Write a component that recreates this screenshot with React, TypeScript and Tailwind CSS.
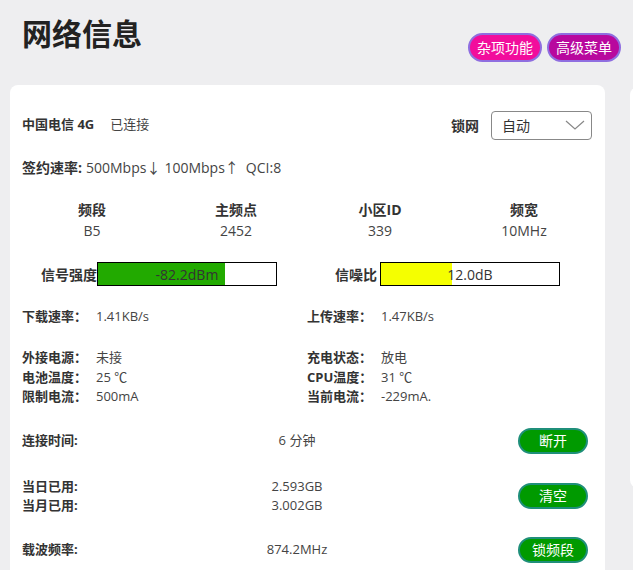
const font = "font-['Open_Sans','Noto_Sans_CJK_SC',sans-serif]";

function PillButton({ label, bg }: { label: string; bg: string }) {
  return (
    <button
      className={`h-[29px] px-[7px] rounded-full border-2 border-[#8f6ee0] text-white text-[14px] leading-none ${bg}`}
    >
      {label}
    </button>
  );
}

function GreenButton({ label }: { label: string }) {
  return (
    <button className="w-[70px] h-[26px] rounded-full bg-[#009a00] border-2 border-[#1f8f7a] text-white text-[14px] leading-none">
      {label}
    </button>
  );
}

function Bar({ pct, fill, text }: { pct: number; fill: string; text: string }) {
  return (
    <div className="relative w-[180px] h-[24px] border border-black bg-white">
      <div className={`h-full ${fill}`} style={{ width: `${pct}%` }} />
      <span className="absolute inset-0 flex items-center justify-center text-[14px] text-[#333]">
        {text}
      </span>
    </div>
  );
}

function Pair({ label, value }: { label: string; value: string }) {
  return (
    <div className="flex">
      <span className="w-[74px] font-bold text-[#333]">{label}</span>
      <span className="text-[#444]">{value}</span>
    </div>
  );
}

export default function App() {
  const cols = [
    ['频段', 'B5'],
    ['主频点', '2452'],
    ['小区ID', '339'],
    ['频宽', '10MHz'],
  ];

  return (
    <div className={`w-[633px] h-[570px] overflow-hidden bg-[#eeeef0] ${font}`}>
      {/* header */}
      <div className="h-[85px] flex items-start">
        <h1 className="pl-[22px] mt-[19px] text-[30px] leading-[30px] font-bold text-[#222]">网络信息</h1>
        <div className="ml-auto mt-[33px] pr-[12px] flex gap-[5px]">
          <PillButton label="杂项功能" bg="bg-[#f20d9c]" />
          <PillButton label="高级菜单" bg="bg-[#b8089e]" />
        </div>
      </div>

      <div className="flex gap-[25px] items-start">
        <div className="ml-[10px] w-[595px] shrink-0 bg-white rounded-[8px] pl-[12px] pb-[20px] text-[13px]">
          {/* carrier + lock */}
          <div className="mt-[25px] h-[30px] pr-[13px] flex items-center">
            <span className="font-bold text-[#333] text-[13px]">中国电信 4G</span>
            <span className="ml-[16px] text-[#444]">已连接</span>
            <span className="ml-auto font-bold text-[14px] text-[#333]">锁网</span>
            <div className="ml-[12px] w-[101px] h-[29px] border border-[#888] rounded-[4px] flex items-center pl-[10px] pr-[6px] text-[14px] text-[#333]">
              <span>自动</span>
              <svg className="ml-auto" width="20" height="10" viewBox="0 0 20 10" fill="none">
                <path d="M1 1 L10 9 L19 1" stroke="#888" strokeWidth="1.2" />
              </svg>
            </div>
          </div>

          {/* subscribed rate */}
          <div className="mt-[17px] h-[20px] flex items-center text-[14px]">
            <span className="font-bold text-[#333]">签约速率:</span>
            <span className="ml-[4px] text-[#444]">500Mbps↓</span>
            <span className="ml-[4px] text-[#444]">100Mbps↑</span>
            <span className="ml-[7px] text-[#444]">QCI:8</span>
          </div>

          {/* cell grid */}
          <div className="-ml-[2px] w-[576px] grid grid-cols-4 text-center text-[14px]">
            {cols.map(([h, v]) => (
              <div key={h}>
                <div className="mt-[23px] h-[20px] leading-[20px] font-bold text-[#333]">{h}</div>
                <div className="mt-[1px] h-[20px] leading-[20px] text-[#444]">{v}</div>
              </div>
            ))}
          </div>

          {/* bars */}
          <div className="mt-[21px] h-[24px] flex items-center text-[14px]">
            <span className="w-[75px] text-right font-bold text-[#333]">信号强度</span>
            <Bar pct={71.5} fill="bg-[#22aa00]" text="-82.2dBm" />
            <span className="w-[103px] pr-[3px] text-right font-bold text-[#333]">信噪比</span>
            <Bar pct={40} fill="bg-[#f5ff00]" text="12.0dB" />
          </div>

          {/* speeds */}
          <div className="mt-[21px] h-[20px] flex items-center">
            <div className="w-[285px]">
              <Pair label="下载速率：" value="1.41KB/s" />
            </div>
            <Pair label="上传速率：" value="1.47KB/s" />
          </div>

          {/* power */}
          <div className="mt-[21px] flex leading-[19.5px]">
            <div className="w-[285px]">
              <Pair label="外接电源：" value="未接" />
              <Pair label="电池温度：" value="25 ℃" />
              <Pair label="限制电流：" value="500mA" />
            </div>
            <div>
              <Pair label="充电状态：" value="放电" />
              <Pair label="CPU温度：" value="31 ℃" />
              <Pair label="当前电流：" value="-229mA." />
            </div>
          </div>

          {/* connection time */}
          <div className="mt-[21px] h-[26px] flex items-center">
            <span className="w-[200px] font-bold text-[#333]">连接时间:</span>
            <span className="w-[150px] text-center text-[#444]">6 分钟</span>
            <div className="ml-[146px]">
              <GreenButton label="断开" />
            </div>
          </div>

          {/* usage */}
          <div className="mt-[23px] h-[38px] flex items-center leading-[19px]">
            <div className="w-[200px] font-bold text-[#333]">
              <div>当日已用:</div>
              <div>当月已用:</div>
            </div>
            <div className="w-[150px] text-center text-[#444]">
              <div>2.593GB</div>
              <div>3.002GB</div>
            </div>
            <div className="ml-[146px]">
              <GreenButton label="清空" />
            </div>
          </div>

          {/* carrier frequency */}
          <div className="mt-[22px] h-[26px] flex items-center">
            <span className="w-[200px] font-bold text-[#333]">载波频率:</span>
            <span className="w-[150px] text-center text-[#444]">874.2MHz</span>
            <div className="ml-[146px]">
              <GreenButton label="锁频段" />
            </div>
          </div>
        </div>

        {/* next card peeking in from the right */}
        <div className="mt-[2px] w-[100px] h-[401px] shrink-0 bg-white rounded-[8px]" />
      </div>
    </div>
  );
}
